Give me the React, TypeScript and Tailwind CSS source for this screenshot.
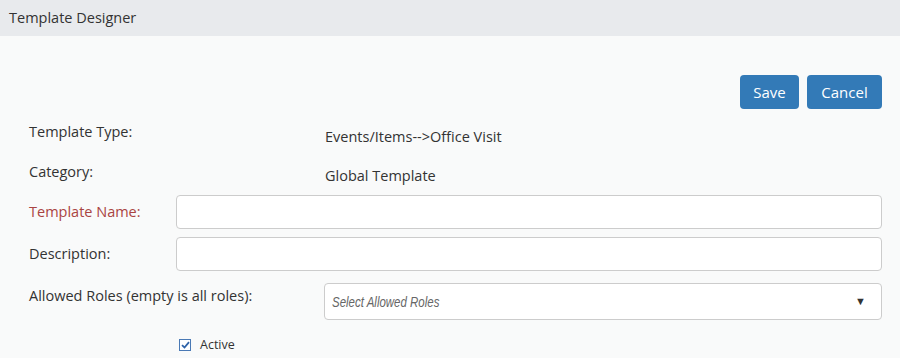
import React from "react";

const font = { fontFamily: '"Open Sans", sans-serif' };

const App: React.FC = () => {
  return (
    <div className="w-[900px] h-[358px] bg-[#f9fafa] text-[#333] text-[14.5px] overflow-hidden" style={font}>
      {/* Header */}
      <div className="h-[36px] bg-[#e8eaed] flex items-center pl-[9px] text-[14.5px] text-[#333]">
        Template Designer
      </div>

      <div className="pl-[29px] pr-[18px]">
        {/* Actions */}
        <div className="flex justify-end gap-[8px] pt-[39px]">
          <button className="h-[34px] w-[59px] rounded-[4px] bg-[#337ab7] text-white text-[15px]">Save</button>
          <button className="h-[34px] w-[75px] rounded-[4px] bg-[#337ab7] text-white text-[15px]">Cancel</button>
        </div>

        {/* Static rows */}
        <div className="flex h-[40px] items-start pt-[12px]">
          <div className="w-[296px]">Template Type:</div>
          <div className="pt-[5px]">Events/Items--&gt;Office Visit</div>
        </div>
        <div className="flex h-[46px] items-start pt-[12px]">
          <div className="w-[296px]">Category:</div>
          <div className="pt-[4px]">Global Template</div>
        </div>

        {/* Inputs */}
        <div className="flex items-center h-[34px]">
          <label className="w-[147px] text-[#a94442]">Template Name:</label>
          <input className="flex-1 h-[34px] bg-white border border-[#ccc] rounded-[4px] px-3 outline-none" />
        </div>
        <div className="flex items-center h-[34px] mt-[8px]">
          <label className="w-[147px]">Description:</label>
          <input className="flex-1 h-[34px] bg-white border border-[#ccc] rounded-[4px] px-3 outline-none" />
        </div>
        <div className="flex items-start mt-[12px]">
          <label className="w-[295px] pt-[2px]">Allowed Roles (empty is all roles):</label>
          <div className="flex-1 h-[37px] bg-white border border-[#ccc] rounded-[4px] flex items-center justify-between pl-[7px] pr-[15px]">
            <span
              className="italic text-[#666] text-[14px] pt-[1px] inline-block origin-left scale-x-[0.82]"
              style={{ fontFamily: '"Liberation Sans", Arial, sans-serif' }}
            >
              Select Allowed Roles
            </span>
            <span className="text-[11px] text-[#333]">▼</span>
          </div>
        </div>

        {/* Active */}
        <div className="flex items-center gap-[9px] pl-[150px] mt-[16px]">
          <span className="w-[12px] h-[12px] border border-[#4a79b5] bg-white flex items-center justify-center">
            <svg width="9" height="8" viewBox="0 0 9 8">
              <path d="M1 4.2 L3.5 6.5 L8 1.2" stroke="#2f63a8" strokeWidth="1.8" fill="none" />
            </svg>
          </span>
          <span className="text-[12.5px]">Active</span>
        </div>
      </div>
    </div>
  );
};

export default App;
